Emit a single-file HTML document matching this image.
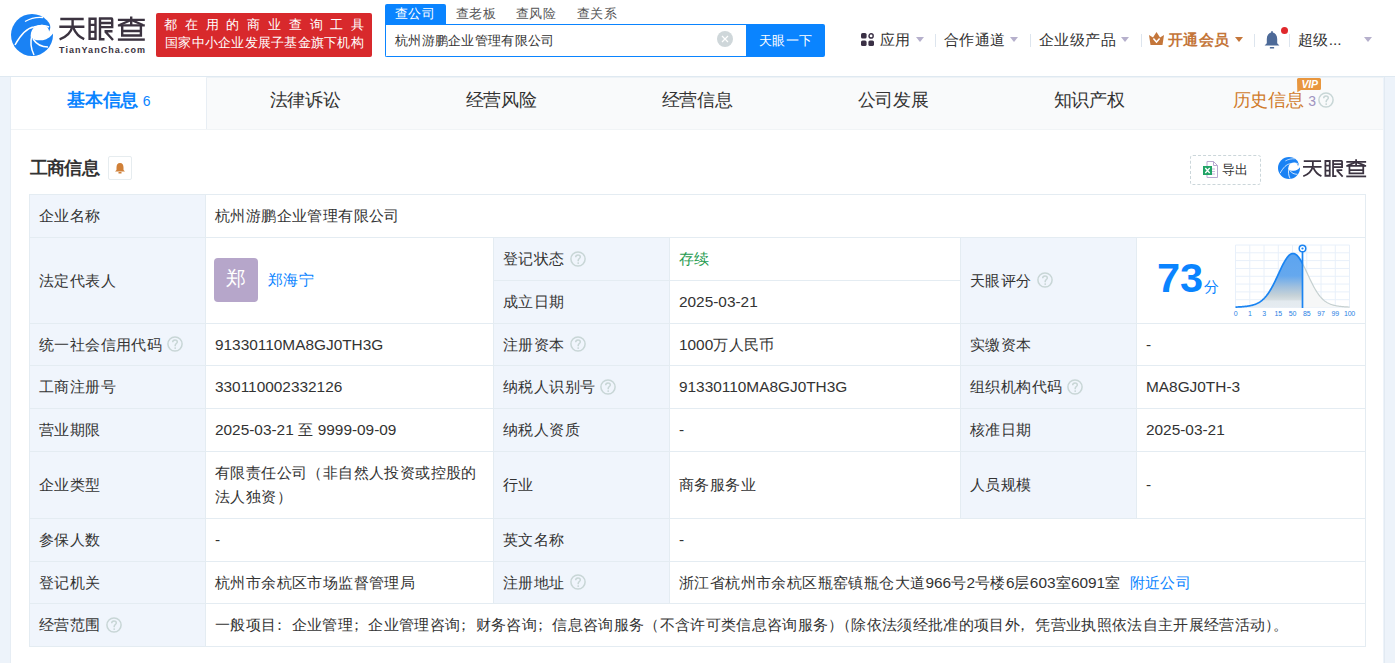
<!DOCTYPE html>
<html><head><meta charset="utf-8">
<style>
*{box-sizing:border-box;margin:0;padding:0}
html,body{width:1395px;height:663px;overflow:hidden}
body{background:#edf3fa;font-family:"Liberation Sans",sans-serif;color:#333;position:relative}
.abs{position:absolute}
.k{letter-spacing:var(--k,0px)}
#hdr{position:absolute;left:0;top:0;width:1395px;height:76px;background:#fff}
.nav{--k:.4px;position:absolute;top:30px;font-size:15.4px;line-height:19px;color:#333;white-space:nowrap}
.caret{position:absolute;width:0;height:0;border-left:4px solid transparent;border-right:4px solid transparent;border-top:5px solid #b6b0cc}
.sep{position:absolute;top:34px;width:1px;height:13px;background:#dde5ee}
#card{position:absolute;left:11px;top:77px;width:1372px;height:600px;background:#fff}
.tab{--k:-.4px;position:absolute;top:0;height:52px;width:196px;background:#f9fafb;font-size:17.6px;line-height:47px;text-align:center;color:#333}
.cell{--k:.4px;position:absolute;display:flex;align-items:center;padding-left:9px;font-size:15.4px;line-height:24px;color:#333;white-space:nowrap;border:1px solid #e4ecf2;background:#fff}
.av{display:inline-block;width:44px;height:44px;border-radius:4px;background:#b6a6ca;color:#fff;font-size:20px;line-height:44px;text-align:center;margin-right:9px}
.lab{background:#f0f5fc}
.hl{position:absolute;height:1px;background:#e4ecf2}
.vl{position:absolute;width:1px;background:#e4ecf2}
.q{display:inline-block;width:16px;height:16px;margin-left:5px;vertical-align:middle;position:relative;top:-1px}
</style></head><body>
<div id="hdr">
  <!-- logo -->
  <svg width="0" height="0" style="position:absolute">
    <defs>
      <mask id="m1" maskUnits="userSpaceOnUse" x="0" y="0" width="42" height="42"><rect width="42" height="42" fill="#fff"/>
        <path d="M19.6 21.9 C19.8 17.5 21.5 14.5 24 12.8 C27 10.8 31 10.2 34 11.5 C36.5 12.5 38 15 38.1 17.6 C39.5 15 39.8 12 38.5 9.5 L42 9.5 L42 19.5 C39 23.5 35 26.2 30 26.3 C27 26.4 25 26 24.1 25.7 C21.5 24.8 19.6 23.5 19.6 21.9 Z" fill="#000"/>
        <path d="M14 7.5 C20 4 27 3 32 3.5" stroke="#000" stroke-width="1.3" fill="none"/>
        <path d="M4 31 C10 20 16 14 23 13 C29 11 34 11 38 13" stroke="#000" stroke-width="1.5" fill="none"/>
        <path d="M21 21 C19 28 20 35 23 41" stroke="#000" stroke-width="1.5" fill="none"/>
        <path d="M22 25 C26 31 31 33 37 33" stroke="#000" stroke-width="1.5" fill="none"/>
      </mask>
      <symbol id="qic" viewBox="0 0 16 16"><circle cx="8" cy="8" r="7.1" fill="none" stroke="#c8d6d6" stroke-width="1.5"/><path d="M5.7 6.3 C5.7 4.8 6.8 4 8 4 C9.3 4 10.3 4.8 10.3 6 C10.3 7.4 8.4 7.6 8.2 9.3 L8.2 10.2" fill="none" stroke="#c8d6d6" stroke-width="1.5"/><circle cx="8.2" cy="12.1" r="0.95" fill="#c8d6d6"/></symbol>
      <g id="logotext" fill="none" stroke="#3b3340" stroke-width="2.4" stroke-linecap="butt" stroke-linejoin="miter">
    <path d="M60.3 19H83.7M59.3 26.8H84.4M72.6 17.8V27"/>
    <path d="M72.4 26.5C71 32.5 66 37 59.6 39.4"/>
    <path d="M73.4 28C75.5 33 79 37 84.2 39.2"/>
    <path d="M89.6 17.6V39.8M88.4 18.7H96.6M95.5 17.6V39.8M88.4 38.7H96.6M89.6 24.9H95.5M89.6 31.9H95.5"/>
    <path d="M100 17.6V40.5M99 18.5H111.5Q112.2 18.5 112.2 19.5V28.2M100 23H112.2M100 27.1H113.2M99 39.3H104.5"/>
    <path d="M104.5 31.2H112.5M105.2 31.5L113 40"/>
    <path d="M117.9 19.9H144.8M131.2 16.5V25.3M117.9 25.4H144.8"/>
    <path d="M130 20.5L119.5 25M132.4 20.5L143 25"/>
    <path d="M122.2 25.4V36.6M140.9 25.4V36.6M122.2 31H140.9M121 35.5H142.1"/>
    <path d="M117.9 39.6H144.8"/>
  </g>
      <symbol id="logoicon" viewBox="0 0 42 42">
        <circle cx="21" cy="21" r="21" fill="#1a82f4" mask="url(#m1)"/>
      </symbol>
    </defs>
  </svg>
  <svg class="abs" style="left:11px;top:14px" width="42" height="42" viewBox="0 0 42 42"><use href="#logoicon"/></svg>
  <svg class="abs" style="left:58px;top:16px" width="88" height="26" viewBox="58 16 88 26"><use href="#logotext"/></svg>
  <div class="abs" style="left:59px;top:43.5px;font-size:9px;line-height:12px;font-weight:700;color:#3b3340;letter-spacing:1.05px">TianYanCha.com</div>
  <!-- red banner -->
  <div class="abs" style="left:156px;top:13px;width:216px;height:44px;background:#d8292c;border-radius:2px"></div>
  <div class="abs" style="left:164px;top:17px;font-size:13.2px;line-height:16px;color:#fff;--k:7.8px;white-space:nowrap"><span class="k">都在用的商业查询工具</span></div>
  <div class="abs" style="left:165px;top:35px;font-size:13.2px;line-height:16px;color:#fff;--k:.25px;white-space:nowrap"><span class="k">国家中小企业发展子基金旗下机构</span></div>
  <!-- search -->
  <div class="abs" style="left:385px;top:4px;width:61px;height:21px;background:#0a84ff;border-radius:2px 2px 0 0"></div>
  <div class="abs" style="left:395px;top:5px;font-size:13.2px;line-height:17px;color:#fff;--k:.3px"><span class="k">查公司</span></div>
  <div class="abs" style="left:456px;top:5px;font-size:13.2px;line-height:17px;color:#555;--k:.3px"><span class="k">查老板</span></div>
  <div class="abs" style="left:516px;top:5px;font-size:13.2px;line-height:17px;color:#555;--k:.3px"><span class="k">查风险</span></div>
  <div class="abs" style="left:577px;top:5px;font-size:13.2px;line-height:17px;color:#555;--k:.3px"><span class="k">查关系</span></div>
  <div class="abs" style="left:385px;top:24px;width:362px;height:33px;border:1px solid #0a84ff;border-right:none;border-radius:0 0 0 2px;background:#fff"></div>
  <div class="abs" style="left:395px;top:31px;font-size:13.2px;line-height:19px;color:#333;--k:.3px"><span class="k">杭州游鹏企业管理有限公司</span></div>
  <div class="abs" style="left:717px;top:31px;width:16px;height:16px;border-radius:50%;background:#cfd7da"></div>
  <svg class="abs" style="left:717px;top:31px" width="16" height="16"><path d="M5 5L11 11M11 5L5 11" stroke="#fff" stroke-width="1.2"/></svg>
  <div class="abs" style="left:746px;top:24px;width:79px;height:33px;background:#0a84ff;border-radius:0 2px 2px 0"></div>
  <div class="abs" style="left:759px;top:31px;font-size:13.2px;line-height:19px;color:#fff;--k:.3px"><span class="k">天眼一下</span></div>
  <!-- right nav -->
  <svg class="abs" style="left:861px;top:33px" width="13" height="13" viewBox="0 0 13 13">
    <rect x="0" y="0" width="5.6" height="5.6" rx="1.6" fill="#3a3045"/>
    <circle cx="10.1" cy="2.9" r="2.1" fill="none" stroke="#3a3045" stroke-width="1.4"/>
    <rect x="0" y="7.4" width="5.6" height="5.6" rx="1.6" fill="#3a3045"/>
    <rect x="7.4" y="7.4" width="5.6" height="5.6" rx="1.6" fill="#3a3045"/>
  </svg>
  <div class="nav" style="left:880px"><span class="k">应用</span></div>
  <div class="caret" style="left:916px;top:37px"></div>
  <div class="sep" style="left:935px"></div>
  <div class="nav" style="left:944px"><span class="k">合作通道</span></div>
  <div class="caret" style="left:1010px;top:37px"></div>
  <div class="sep" style="left:1030px"></div>
  <div class="nav" style="left:1039px"><span class="k">企业级产品</span></div>
  <div class="caret" style="left:1121px;top:37px"></div>
  <div class="sep" style="left:1141px"></div>
  <svg class="abs" style="left:1149px;top:32px" width="15" height="13" viewBox="0 0 15 13">
    <path d="M0 3 L4 5.5 L7.5 0 L11 5.5 L15 3 L13.5 13 L1.5 13 Z" fill="#c4763a"/>
    <path d="M4.4 6.4 L7.5 10 L10.6 6.4" stroke="#fff" stroke-width="1.5" fill="none"/>
  </svg>
  <div class="nav" style="left:1168px;color:#c4763a;font-weight:700"><span class="k">开通会员</span></div>
  <div class="caret" style="left:1235px;top:37px;border-top-color:#c4763a"></div>
  <div class="sep" style="left:1254px"></div>
  <svg class="abs" style="left:1264px;top:31px" width="16" height="18" viewBox="0 0 16 18">
    <path d="M8 1.3 C4.6 2 2.8 4.3 2.8 8 L2.8 12.3 L0.6 14.6 L15.4 14.6 L13.2 12.3 L13.2 8 C13.2 4.3 11.4 2 8 1.3Z" fill="#4d6a98"/>
    <rect x="7.2" y="0.2" width="1.6" height="2" fill="#4d6a98"/>
    <rect x="5.8" y="16" width="4.4" height="1.5" rx="0.6" fill="#4d6a98"/>
  </svg>
  <div class="abs" style="left:1281px;top:27px;width:7px;height:7px;border-radius:50%;background:#e0282c"></div>
  <div class="sep" style="left:1289px"></div>
  <div class="nav" style="left:1298px"><span class="k">超级</span>...</div>
  <div class="caret" style="left:1364px;top:37px"></div>
</div>
<div class="abs" style="left:0;top:76px;width:1395px;height:1px;background:#dfe9f1"></div>
<div class="abs" style="left:1384px;top:77px;width:1px;height:600px;background:#e2eaf2"></div>
<div class="abs" style="left:10px;top:77px;width:1px;height:600px;background:#e6edf4"></div>
<div id="card">
  <div class="tab" style="left:0;background:#fff;color:#0a84ff;font-weight:700"><span class="k">基本信息</span><span style="font-size:14px;font-weight:400;margin-left:5px">6</span></div>
  <div class="tab" style="left:196px"><span class="k">法律诉讼</span></div>
  <div class="tab" style="left:392px"><span class="k">经营风险</span></div>
  <div class="tab" style="left:588px"><span class="k">经营信息</span></div>
  <div class="tab" style="left:784px"><span class="k">公司发展</span></div>
  <div class="tab" style="left:980px"><span class="k">知识产权</span></div>
  <div class="tab" style="left:1176px;color:#d07a2c;padding-right:3px"><span class="k">历史信息</span><span style="font-size:14px;color:#9f93c0;margin-left:5px">3</span><svg class="q" style="margin-left:2px;top:-1.5px" viewBox="0 0 16 16"><use href="#qic"/></svg></div>
  <svg class="abs" style="left:1285px;top:1px" width="27" height="15" viewBox="0 0 27 15">
    <path d="M2.5 0 H23.5 Q25 0 25 1.5 V10.5 Q25 12 23.5 12 H5 L1.3 14.3 L1 1.5 Q1 0 2.5 0Z" fill="#e8963e"/>
    <text x="13.6" y="9.9" font-family="Liberation Sans" font-size="10.5" font-style="italic" font-weight="700" fill="#fff" text-anchor="middle" letter-spacing="-0.3">VIP</text>
  </svg>
  <div class="abs" style="left:0;top:52px;width:1372px;height:1px;background:#f1f4f6"></div>
  <div class="abs" style="left:195px;top:0;width:1px;height:52px;background:#e8eef4"></div>
  <div class="abs" style="left:195px;top:0;width:1177px;height:1px;background:#edf2f6"></div>
  <div class="abs" style="left:19px;top:79px;font-size:17.6px;line-height:24px;font-weight:700;color:#333;--k:-.8px"><span class="k">工商信息</span></div>
  <div class="abs" style="left:97px;top:79px;width:24px;height:24px;border:1px solid #e6ecef;border-radius:2px;background:#fff"></div>
  <svg class="abs" style="left:103px;top:85px" width="12" height="12" viewBox="0 0 12 12"><path d="M6 1C3.5 1 2.5 3 2.5 5.5V8L1 9.5H11L9.5 8V5.5C9.5 3 8.5 1 6 1Z" fill="#d08038"/><rect x="4.5" y="10" width="3" height="1.5" fill="#d08038"/></svg>
  <div class="abs" style="left:1179px;top:78px;width:71px;height:30px;border:1px dashed #cbd6da;border-radius:3px"></div>
  <svg class="abs" style="left:1192px;top:84px" width="15" height="17" viewBox="0 0 15 17">
    <path d="M4 0.5H10.5L14.5 4.5V16.5H4Z" fill="#fff" stroke="#b9a8d0" stroke-width="1"/>
    <path d="M10.5 0.5V4.5H14.5" fill="none" stroke="#b9a8d0" stroke-width="1"/>
    <path d="M7 8H12M7 10.5H12M7 13H12" stroke="#b9a8d0" stroke-width="0.8"/>
    <rect x="0" y="5" width="9" height="9" fill="#21a366"/>
    <path d="M2.3 7L6.7 12M6.7 7L2.3 12" stroke="#fff" stroke-width="1.3"/>
  </svg>
  <div class="abs" style="left:1211px;top:82.5px;font-size:13.2px;line-height:20px;color:#333;--k:.3px"><span class="k">导出</span></div>
  <svg class="abs" style="left:1267px;top:80px" width="22" height="22" viewBox="0 0 42 42">
    <use href="#logoicon"/>
  </svg>
  <svg class="abs" style="left:1290.8px;top:81.9px" width="65.1" height="19.2" viewBox="58 16 88 26"><use href="#logotext"/></svg>
</div>
<!--TABLE-->
<div class="cell lab" style="left:29px;top:194px;width:177px;height:44px"><div><span class="k">企业名称</span></div></div>
<div class="cell" style="left:205px;top:194px;width:1161px;height:44px"><div><span class="k">杭州游鹏企业管理有限公司</span></div></div>
<div class="cell lab" style="left:29px;top:237px;width:177px;height:87px"><div><span class="k">法定代表人</span></div></div>
<div class="cell" style="left:205px;top:237px;width:289px;height:87px"><div><span class="av" style="position:relative;left:-1px;top:-1px;vertical-align:middle"><span style="position:relative;top:-1.5px"><span class="k">郑</span></span></span><span style="color:#0a84ff;position:relative;top:-1px;vertical-align:middle"><span class="k">郑海宁</span></span></div></div>
<div class="cell lab" style="left:493px;top:237px;width:177px;height:44px"><div><span class="k">登记状态</span><svg class="q" viewBox="0 0 16 16"><use href="#qic"/></svg></div></div>
<div class="cell" style="left:669px;top:237px;width:292px;height:44px"><div><span style="color:#1f9b50"><span class="k">存续</span></span></div></div>
<div class="cell lab" style="left:493px;top:280px;width:177px;height:44px"><div><span class="k">成立日期</span></div></div>
<div class="cell" style="left:669px;top:280px;width:292px;height:44px"><div>2025-03-21</div></div>
<div class="cell lab" style="left:960px;top:237px;width:177px;height:87px"><div><span class="k">天眼评分</span><svg class="q" viewBox="0 0 16 16"><use href="#qic"/></svg></div></div>
<div class="cell" style="left:1136px;top:237px;width:230px;height:87px"></div>
<div class="cell lab" style="left:29px;top:323px;width:177px;height:43px"><div><span class="k">统一社会信用代码</span><svg class="q" viewBox="0 0 16 16"><use href="#qic"/></svg></div></div>
<div class="cell" style="left:205px;top:323px;width:289px;height:43px"><div>91330110MA8GJ0TH3G</div></div>
<div class="cell lab" style="left:493px;top:323px;width:177px;height:43px"><div><span class="k">注册资本</span><svg class="q" viewBox="0 0 16 16"><use href="#qic"/></svg></div></div>
<div class="cell" style="left:669px;top:323px;width:292px;height:43px"><div>1000<span class="k">万人民币</span></div></div>
<div class="cell lab" style="left:960px;top:323px;width:177px;height:43px"><div><span class="k">实缴资本</span></div></div>
<div class="cell" style="left:1136px;top:323px;width:230px;height:43px"><div>-</div></div>
<div class="cell lab" style="left:29px;top:365px;width:177px;height:44px"><div><span class="k">工商注册号</span></div></div>
<div class="cell" style="left:205px;top:365px;width:289px;height:44px"><div>330110002332126</div></div>
<div class="cell lab" style="left:493px;top:365px;width:177px;height:44px"><div><span class="k">纳税人识别号</span><svg class="q" viewBox="0 0 16 16"><use href="#qic"/></svg></div></div>
<div class="cell" style="left:669px;top:365px;width:292px;height:44px"><div>91330110MA8GJ0TH3G</div></div>
<div class="cell lab" style="left:960px;top:365px;width:177px;height:44px"><div><span class="k">组织机构代码</span><svg class="q" viewBox="0 0 16 16"><use href="#qic"/></svg></div></div>
<div class="cell" style="left:1136px;top:365px;width:230px;height:44px"><div>MA8GJ0TH-3</div></div>
<div class="cell lab" style="left:29px;top:408px;width:177px;height:44px"><div><span class="k">营业期限</span></div></div>
<div class="cell" style="left:205px;top:408px;width:289px;height:44px"><div>2025-03-21 <span class="k">至</span> 9999-09-09</div></div>
<div class="cell lab" style="left:493px;top:408px;width:177px;height:44px"><div><span class="k">纳税人资质</span></div></div>
<div class="cell" style="left:669px;top:408px;width:292px;height:44px"><div>-</div></div>
<div class="cell lab" style="left:960px;top:408px;width:177px;height:44px"><div><span class="k">核准日期</span></div></div>
<div class="cell" style="left:1136px;top:408px;width:230px;height:44px"><div>2025-03-21</div></div>
<div class="cell lab" style="left:29px;top:451px;width:177px;height:68px"><div><span class="k">企业类型</span></div></div>
<div class="cell" style="left:205px;top:451px;width:289px;height:68px"><div><span class="k">有限责任公司（非自然人投资或控股的</span><br><span class="k">法人独资）</span></div></div>
<div class="cell lab" style="left:493px;top:451px;width:177px;height:68px"><div><span class="k">行业</span></div></div>
<div class="cell" style="left:669px;top:451px;width:292px;height:68px"><div><span class="k">商务服务业</span></div></div>
<div class="cell lab" style="left:960px;top:451px;width:177px;height:68px"><div><span class="k">人员规模</span></div></div>
<div class="cell" style="left:1136px;top:451px;width:230px;height:68px"><div>-</div></div>
<div class="cell lab" style="left:29px;top:518px;width:177px;height:44px"><div><span class="k">参保人数</span></div></div>
<div class="cell" style="left:205px;top:518px;width:289px;height:44px"><div>-</div></div>
<div class="cell lab" style="left:493px;top:518px;width:177px;height:44px"><div><span class="k">英文名称</span></div></div>
<div class="cell" style="left:669px;top:518px;width:697px;height:44px"><div>-</div></div>
<div class="cell lab" style="left:29px;top:561px;width:177px;height:43px"><div><span class="k">登记机关</span></div></div>
<div class="cell" style="left:205px;top:561px;width:289px;height:43px"><div><span class="k">杭州市余杭区市场监督管理局</span></div></div>
<div class="cell lab" style="left:493px;top:561px;width:177px;height:43px"><div><span class="k">注册地址</span><svg class="q" viewBox="0 0 16 16"><use href="#qic"/></svg></div></div>
<div class="cell" style="left:669px;top:561px;width:697px;height:43px"><div><span class="k">浙江省杭州市余杭区瓶窑镇瓶仓大道</span>966<span class="k">号</span>2<span class="k">号楼</span>6<span class="k">层</span>603<span class="k">室</span>6091<span class="k">室</span><span style="color:#0a84ff;margin-left:9px"><span class="k">附近公司</span></span></div></div>
<div class="cell lab" style="left:29px;top:603px;width:177px;height:44px"><div><span class="k">经营范围</span><svg class="q" viewBox="0 0 16 16"><use href="#qic"/></svg></div></div>
<div class="cell" style="left:205px;top:603px;width:1161px;height:44px"><div><span style="--k:.33px"><span class="k">一般项目</span><span style="position:relative;left:-4.5px"><span class="k">：</span></span><span class="k">企业管理</span><span style="position:relative;left:-4.5px"><span class="k">；</span></span><span class="k">企业管理咨询</span><span style="position:relative;left:-4.5px"><span class="k">；</span></span><span class="k">财务咨询</span><span style="position:relative;left:-4.5px"><span class="k">；</span></span><span class="k">信息咨询服务（不含许可类信息咨询服务</span><span style="--k:-7.3px"><span class="k">）</span></span><span class="k">（除依法须经批准的项目外</span><span style="position:relative;left:-4.5px"><span class="k">，</span></span><span class="k">凭营业执照依法自主开展经营活动</span><span style="--k:-7.3px"><span class="k">）</span></span><span class="k">。</span></span></div></div>
<div class="abs" style="left:1157px;top:252.5px;font-size:41.5px;line-height:50px;font-weight:700;color:#0a84ff">73</div>
<div class="abs" style="left:1204px;top:276.5px;font-size:14.6px;line-height:20px;color:#0a84ff"><span class="k">分</span></div>
<svg class="abs" style="left:1230px;top:240px" width="130" height="82" viewBox="0 0 130 82">
<defs><linearGradient id="gl" gradientUnits="userSpaceOnUse" x1="0" y1="13" x2="0" y2="67.5"><stop offset="0" stop-color="#5ca4f0"/><stop offset="0.42" stop-color="#65a8ee"/><stop offset="0.62" stop-color="#a0c0de"/><stop offset="0.78" stop-color="#c6d2d8"/><stop offset="0.86" stop-color="#d6dee2"/><stop offset="0.88" stop-color="#e3eaef"/><stop offset="1" stop-color="#e6ecf1"/></linearGradient></defs>
<g stroke="#e8f0fa" stroke-width="1"><line x1="5.50" y1="5" x2="5.50" y2="67.5" /><line x1="19.75" y1="5" x2="19.75" y2="67.5" /><line x1="34.00" y1="5" x2="34.00" y2="67.5" /><line x1="48.25" y1="5" x2="48.25" y2="67.5" /><line x1="62.50" y1="5" x2="62.50" y2="67.5" /><line x1="76.75" y1="5" x2="76.75" y2="67.5" /><line x1="91.00" y1="5" x2="91.00" y2="67.5" /><line x1="105.25" y1="5" x2="105.25" y2="67.5" /><line x1="119.50" y1="5" x2="119.50" y2="67.5" /><line x1="5.50" y1="5.00" x2="119.50" y2="5.00" /><line x1="5.50" y1="12.81" x2="119.50" y2="12.81" /><line x1="5.50" y1="20.62" x2="119.50" y2="20.62" /><line x1="5.50" y1="28.44" x2="119.50" y2="28.44" /><line x1="5.50" y1="36.25" x2="119.50" y2="36.25" /><line x1="5.50" y1="44.06" x2="119.50" y2="44.06" /><line x1="5.50" y1="51.88" x2="119.50" y2="51.88" /><line x1="5.50" y1="59.69" x2="119.50" y2="59.69" /><line x1="5.50" y1="67.50" x2="119.50" y2="67.50" /></g>
<polygon points="72.50,23.50 73.00,24.46 73.50,25.44 74.00,26.45 74.50,27.47 75.00,28.51 75.50,29.57 76.00,30.63 76.50,31.71 77.00,32.79 77.50,33.87 78.00,34.95 78.50,36.03 79.00,37.11 79.50,38.18 80.00,39.24 80.50,40.29 81.00,41.32 81.50,42.35 82.00,43.35 82.50,44.34 83.00,45.30 83.50,46.25 84.00,47.17 84.50,48.07 85.00,48.95 85.50,49.80 86.00,50.63 86.50,51.43 87.00,52.21 87.50,52.96 88.00,53.68 88.50,54.38 89.00,55.05 89.50,55.69 90.00,56.31 90.50,56.90 91.00,57.47 91.50,58.01 92.00,58.53 92.50,59.02 93.00,59.49 93.50,59.94 94.00,60.36 94.50,60.76 95.00,61.15 95.50,61.51 96.00,61.85 96.50,62.17 97.00,62.48 97.50,62.77 98.00,63.04 98.50,63.30 99.00,63.54 99.50,63.77 100.00,63.98 100.50,64.19 101.00,64.38 101.50,64.55 102.00,64.72 102.50,64.88 103.00,65.03 103.50,65.17 104.00,65.30 104.50,65.42 105.00,65.53 105.50,65.64 106.00,65.74 106.50,65.84 107.00,65.93 107.50,66.01 108.00,66.09 108.50,66.16 109.00,66.23 109.50,66.30 110.00,66.36 110.50,66.42 111.00,66.47 111.50,66.52 112.00,66.57 112.50,66.62 113.00,66.66 113.50,66.70 114.00,66.74 114.50,66.78 115.00,66.81 115.50,66.85 116.00,66.88 116.50,66.91 117.00,66.94 117.50,66.96 118.00,66.99 118.50,67.01 119.00,67.04 119.50,67.06 119.50,67.50 72.5,67.50" fill="#f6f7f7"/>
<polyline points="72.50,23.50 73.00,24.46 73.50,25.44 74.00,26.45 74.50,27.47 75.00,28.51 75.50,29.57 76.00,30.63 76.50,31.71 77.00,32.79 77.50,33.87 78.00,34.95 78.50,36.03 79.00,37.11 79.50,38.18 80.00,39.24 80.50,40.29 81.00,41.32 81.50,42.35 82.00,43.35 82.50,44.34 83.00,45.30 83.50,46.25 84.00,47.17 84.50,48.07 85.00,48.95 85.50,49.80 86.00,50.63 86.50,51.43 87.00,52.21 87.50,52.96 88.00,53.68 88.50,54.38 89.00,55.05 89.50,55.69 90.00,56.31 90.50,56.90 91.00,57.47 91.50,58.01 92.00,58.53 92.50,59.02 93.00,59.49 93.50,59.94 94.00,60.36 94.50,60.76 95.00,61.15 95.50,61.51 96.00,61.85 96.50,62.17 97.00,62.48 97.50,62.77 98.00,63.04 98.50,63.30 99.00,63.54 99.50,63.77 100.00,63.98 100.50,64.19 101.00,64.38 101.50,64.55 102.00,64.72 102.50,64.88 103.00,65.03 103.50,65.17 104.00,65.30 104.50,65.42 105.00,65.53 105.50,65.64 106.00,65.74 106.50,65.84 107.00,65.93 107.50,66.01 108.00,66.09 108.50,66.16 109.00,66.23 109.50,66.30 110.00,66.36 110.50,66.42 111.00,66.47 111.50,66.52 112.00,66.57 112.50,66.62 113.00,66.66 113.50,66.70 114.00,66.74 114.50,66.78 115.00,66.81 115.50,66.85 116.00,66.88 116.50,66.91 117.00,66.94 117.50,66.96 118.00,66.99 118.50,67.01 119.00,67.04 119.50,67.06" fill="none" stroke="#c5d0d0" stroke-width="1.2"/>
<polygon points="5.50,67.10 6.00,67.08 6.50,67.06 7.00,67.04 7.50,67.01 8.00,66.99 8.50,66.96 9.00,66.94 9.50,66.91 10.00,66.88 10.50,66.85 11.00,66.81 11.50,66.78 12.00,66.74 12.50,66.70 13.00,66.66 13.50,66.62 14.00,66.57 14.50,66.52 15.00,66.47 15.50,66.42 16.00,66.36 16.50,66.30 17.00,66.23 17.50,66.16 18.00,66.09 18.50,66.01 19.00,65.93 19.50,65.84 20.00,65.74 20.50,65.64 21.00,65.53 21.50,65.42 22.00,65.30 22.50,65.17 23.00,65.03 23.50,64.88 24.00,64.72 24.50,64.55 25.00,64.38 25.50,64.19 26.00,63.98 26.50,63.77 27.00,63.54 27.50,63.30 28.00,63.04 28.50,62.77 29.00,62.48 29.50,62.17 30.00,61.85 30.50,61.51 31.00,61.15 31.50,60.76 32.00,60.36 32.50,59.94 33.00,59.49 33.50,59.02 34.00,58.53 34.50,58.01 35.00,57.47 35.50,56.90 36.00,56.31 36.50,55.69 37.00,55.05 37.50,54.38 38.00,53.68 38.50,52.96 39.00,52.21 39.50,51.43 40.00,50.63 40.50,49.80 41.00,48.95 41.50,48.07 42.00,47.17 42.50,46.25 43.00,45.30 43.50,44.34 44.00,43.35 44.50,42.35 45.00,41.32 45.50,40.29 46.00,39.24 46.50,38.18 47.00,37.11 47.50,36.03 48.00,34.95 48.50,33.87 49.00,32.79 49.50,31.71 50.00,30.63 50.50,29.57 51.00,28.51 51.50,27.47 52.00,26.45 52.50,25.44 53.00,24.46 53.50,23.50 54.00,22.57 54.50,21.67 55.00,20.81 55.50,19.98 56.00,19.20 56.50,18.45 57.00,17.75 57.50,17.09 58.00,16.49 58.50,15.93 59.00,15.43 59.50,14.99 60.00,14.60 60.50,14.26 61.00,13.99 61.50,13.78 62.00,13.62 62.50,13.53 63.00,13.50 63.50,13.53 64.00,13.62 64.50,13.78 65.00,13.99 65.50,14.26 66.00,14.60 66.50,14.99 67.00,15.43 67.50,15.93 68.00,16.49 68.50,17.09 69.00,17.75 69.50,18.45 70.00,19.20 70.50,19.98 71.00,20.81 71.50,21.67 72.00,22.57 72.50,23.50 72.5,67.50 5,67.50" fill="url(#gl)"/>
<polyline points="5.50,67.10 6.00,67.08 6.50,67.06 7.00,67.04 7.50,67.01 8.00,66.99 8.50,66.96 9.00,66.94 9.50,66.91 10.00,66.88 10.50,66.85 11.00,66.81 11.50,66.78 12.00,66.74 12.50,66.70 13.00,66.66 13.50,66.62 14.00,66.57 14.50,66.52 15.00,66.47 15.50,66.42 16.00,66.36 16.50,66.30 17.00,66.23 17.50,66.16 18.00,66.09 18.50,66.01 19.00,65.93 19.50,65.84 20.00,65.74 20.50,65.64 21.00,65.53 21.50,65.42 22.00,65.30 22.50,65.17 23.00,65.03 23.50,64.88 24.00,64.72 24.50,64.55 25.00,64.38 25.50,64.19 26.00,63.98 26.50,63.77 27.00,63.54 27.50,63.30 28.00,63.04 28.50,62.77 29.00,62.48 29.50,62.17 30.00,61.85 30.50,61.51 31.00,61.15 31.50,60.76 32.00,60.36 32.50,59.94 33.00,59.49 33.50,59.02 34.00,58.53 34.50,58.01 35.00,57.47 35.50,56.90 36.00,56.31 36.50,55.69 37.00,55.05 37.50,54.38 38.00,53.68 38.50,52.96 39.00,52.21 39.50,51.43 40.00,50.63 40.50,49.80 41.00,48.95 41.50,48.07 42.00,47.17 42.50,46.25 43.00,45.30 43.50,44.34 44.00,43.35 44.50,42.35 45.00,41.32 45.50,40.29 46.00,39.24 46.50,38.18 47.00,37.11 47.50,36.03 48.00,34.95 48.50,33.87 49.00,32.79 49.50,31.71 50.00,30.63 50.50,29.57 51.00,28.51 51.50,27.47 52.00,26.45 52.50,25.44 53.00,24.46 53.50,23.50 54.00,22.57 54.50,21.67 55.00,20.81 55.50,19.98 56.00,19.20 56.50,18.45 57.00,17.75 57.50,17.09 58.00,16.49 58.50,15.93 59.00,15.43 59.50,14.99 60.00,14.60 60.50,14.26 61.00,13.99 61.50,13.78 62.00,13.62 62.50,13.53 63.00,13.50 63.50,13.53 64.00,13.62 64.50,13.78 65.00,13.99 65.50,14.26 66.00,14.60 66.50,14.99 67.00,15.43 67.50,15.93 68.00,16.49 68.50,17.09 69.00,17.75 69.50,18.45 70.00,19.20 70.50,19.98 71.00,20.81 71.50,21.67 72.00,22.57 72.50,23.50" fill="none" stroke="#1a84f2" stroke-width="1.7"/>
<line x1="72.5" y1="11" x2="72.5" y2="68.0" stroke="#1a84f2" stroke-width="1.7"/>
<circle cx="72.5" cy="8.5" r="3.3" fill="#fff" stroke="#1a84f2" stroke-width="1.5"/>
<circle cx="72.5" cy="8.5" r="1.1" fill="#1a84f2"/>
<g font-family="Liberation Sans" font-size="7" fill="#2a80e4" letter-spacing="-0.2"><text x="5.50" y="76" text-anchor="middle">0</text><text x="19.75" y="76" text-anchor="middle">1</text><text x="34.00" y="76" text-anchor="middle">3</text><text x="48.25" y="76" text-anchor="middle">15</text><text x="62.50" y="76" text-anchor="middle">50</text><text x="76.75" y="76" text-anchor="middle">85</text><text x="91.00" y="76" text-anchor="middle">97</text><text x="105.25" y="76" text-anchor="middle">99</text><text x="119.50" y="76" text-anchor="middle">100</text></g>
</svg>
<!--/TABLE-->
</body></html>
